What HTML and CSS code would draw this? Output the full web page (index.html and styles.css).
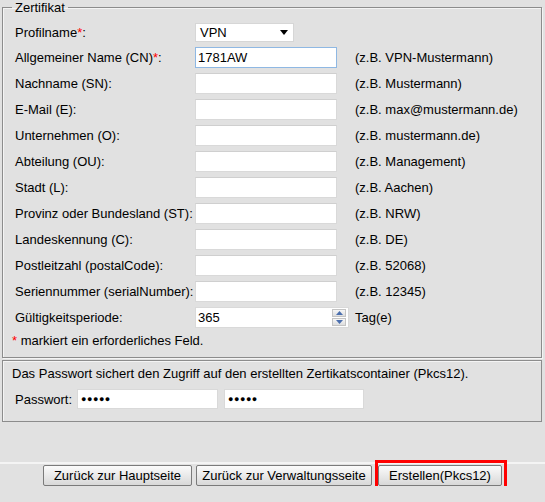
FILE: index.html
```html
<!DOCTYPE html>
<html lang="de">
<head>
<meta charset="utf-8">
<title>Zertifikat</title>
<link rel="stylesheet" href="styles.css">
</head>
<body>
<div class="page">
  <fieldset class="cert">
    <legend>Zertifikat</legend>
    <div class="grid">
      <div class="lbl">Profilname<span class="req">*</span>:</div>
      <div class="select"><span>VPN</span><svg width="8" height="5" viewBox="0 0 8 5"><path d="M0 0H8L4 5Z" fill="#000"/></svg></div>
      <div></div>

      <div class="lbl">Allgemeiner Name (CN)<span class="req">*</span>:</div>
      <input class="txt focus" type="text" value="1781AW">
      <div class="hint">(z.B. VPN-Mustermann)</div>

      <div class="lbl">Nachname (SN):</div>
      <input class="txt" type="text">
      <div class="hint">(z.B. Mustermann)</div>

      <div class="lbl">E-Mail (E):</div>
      <input class="txt" type="text">
      <div class="hint">(z.B. max@mustermann.de)</div>

      <div class="lbl">Unternehmen (O):</div>
      <input class="txt" type="text">
      <div class="hint">(z.B. mustermann.de)</div>

      <div class="lbl">Abteilung (OU):</div>
      <input class="txt" type="text">
      <div class="hint">(z.B. Management)</div>

      <div class="lbl">Stadt (L):</div>
      <input class="txt" type="text">
      <div class="hint">(z.B. Aachen)</div>

      <div class="lbl">Provinz oder Bundesland (ST):</div>
      <input class="txt" type="text">
      <div class="hint">(z.B. NRW)</div>

      <div class="lbl">Landeskennung (C):</div>
      <input class="txt" type="text">
      <div class="hint">(z.B. DE)</div>

      <div class="lbl">Postleitzahl (postalCode):</div>
      <input class="txt" type="text">
      <div class="hint">(z.B. 52068)</div>

      <div class="lbl">Seriennummer (serialNumber):</div>
      <input class="txt" type="text">
      <div class="hint">(z.B. 12345)</div>

      <div class="lbl">Gültigkeitsperiode:</div>
      <div class="spin">
        <span class="spin-val">365</span>
        <div class="spin-btns">
          <div class="sb"><svg width="7" height="4" viewBox="0 0 7 4"><path d="M0 4H7L3.5 0Z" fill="#4b6fae"/></svg></div>
          <div class="sb"><svg width="7" height="4" viewBox="0 0 7 4"><path d="M0 0H7L3.5 4Z" fill="#4b6fae"/></svg></div>
        </div>
      </div>
      <div class="hint">Tag(e)</div>
    </div>
    <div class="note"><span class="req">*</span> markiert ein erforderliches Feld.</div>
  </fieldset>

  <div class="pwbox">
    <div class="pwtext">Das Passwort sichert den Zugriff auf den erstellten Zertikatscontainer (Pkcs12).</div>
    <div class="pwrow">
      <span class="pwlbl">Passwort:</span>
      <div class="pw pw1">●●●●●</div>
      <div class="pw pw2">●●●●●</div>
    </div>
  </div>
</div>

<div class="footer">
  <button class="btn b1" type="button">Zurück zur Hauptseite</button>
  <button class="btn b2" type="button">Zurück zur Verwaltungsseite</button>
  <span class="mark"><button class="btn b3" type="button">Erstellen(Pkcs12)</button></span>
</div>
</body>
</html>
```

FILE: styles.css
```css
html, body {
  margin: 0;
  padding: 0;
  background: #e1e1e1;
  font-family: "Liberation Sans", Arial, sans-serif;
  font-size: 13px;
  line-height: 15px;
  color: #000;
}

.page {
  padding: 0 3px 0 2px;
}

.cert {
  margin: 0;
  border: 1px solid #8c8c8c;
  box-shadow: inset 1px 1px 0 #f4f4f4, 1px 1px 0 #f4f4f4;
  padding: 7px 12px 9px 12px;
  min-width: 0;
}

.cert legend {
  padding: 0 3px;
  margin-left: -3px;
  line-height: 15px;
}

.grid {
  display: grid;
  grid-template-columns: 180px 160px auto;
  grid-template-rows: 20px repeat(11, 21px);
  row-gap: 5px;
  align-items: center;
}

.lbl, .hint {
  white-space: nowrap;
}

.req {
  color: #f00;
}

.select {
  display: flex;
  align-items: center;
  justify-content: space-between;
  box-sizing: border-box;
  width: 99px;
  height: 19px;
  margin-top: 1px;
  background: #fff;
  border: 1px solid #d6d6d6;
  padding: 0 5px 0 4px;
}

.txt {
  box-sizing: border-box;
  width: 142px;
  height: 21px;
  margin: 0;
  padding: 0 2px;
  background: #fff;
  border: 1px solid #d9d9d9;
  border-top-color: #cfcfcf;
  font: 13px "Liberation Sans", Arial, sans-serif;
  color: #000;
  outline: none;
}

.txt.focus {
  border-color: #8fb8e3;
}

.spin {
  box-sizing: border-box;
  width: 154px;
  height: 21px;
  display: flex;
  align-items: center;
  justify-content: space-between;
  background: #fff;
  border: 1px solid #d9d9d9;
  padding: 0 2px 0 2px;
}

.spin-btns {
  display: flex;
  flex-direction: column;
  gap: 1px;
}

.sb {
  box-sizing: border-box;
  width: 14px;
  height: 8px;
  display: flex;
  align-items: center;
  justify-content: center;
  background: linear-gradient(#f6f6f6, #dedede);
  border: 1px solid #c4c4c4;
}

.note {
  margin-top: 5px;
  margin-left: -3px;
}

.pwbox {
  margin-top: 2px;
  border: 1px solid #8c8c8c;
  box-shadow: inset 1px 1px 0 #f4f4f4;
  padding: 5px 9px 12px 9px;
}

.pwrow {
  display: flex;
  align-items: center;
  margin-top: 8px;
  margin-left: 3px;
}

.pwlbl {
  margin-right: 5px;
}

.pw {
  box-sizing: border-box;
  height: 20px;
  background: #fff;
  border: 1px solid #d9d9d9;
  padding: 0 3px;
  font-size: 9px;
  letter-spacing: 0.5px;
  line-height: 18px;
}

.pw1 { width: 141px; }
.pw2 { width: 140px; margin-left: 6px; }

.footer {
  margin-top: 40px;
  border-top: 2px solid #f4f4f4;
  padding-top: 1px;
  display: flex;
  justify-content: center;
  gap: 4px;
}

.btn {
  box-sizing: border-box;
  height: 21px;
  margin: 0;
  padding: 0;
  border: 1px solid #7a7a7a;
  border-radius: 2px;
  background: linear-gradient(#fbfbfb, #e6e6e6 60%, #d8d8d8);
  font: 13px "Liberation Sans", Arial, sans-serif;
  color: #000;
  white-space: nowrap;
  text-align: center;
}

.b1 { width: 149px; }
.b2 { width: 176px; }
.b3 { width: 124px; }

.mark {
  position: relative;
  display: inline-flex;
  margin-left: 2px;
}

.mark::after {
  content: "";
  position: absolute;
  top: -5px;
  bottom: -5px;
  left: -3px;
  right: -5px;
  border: 3px solid #f00;
}
```
